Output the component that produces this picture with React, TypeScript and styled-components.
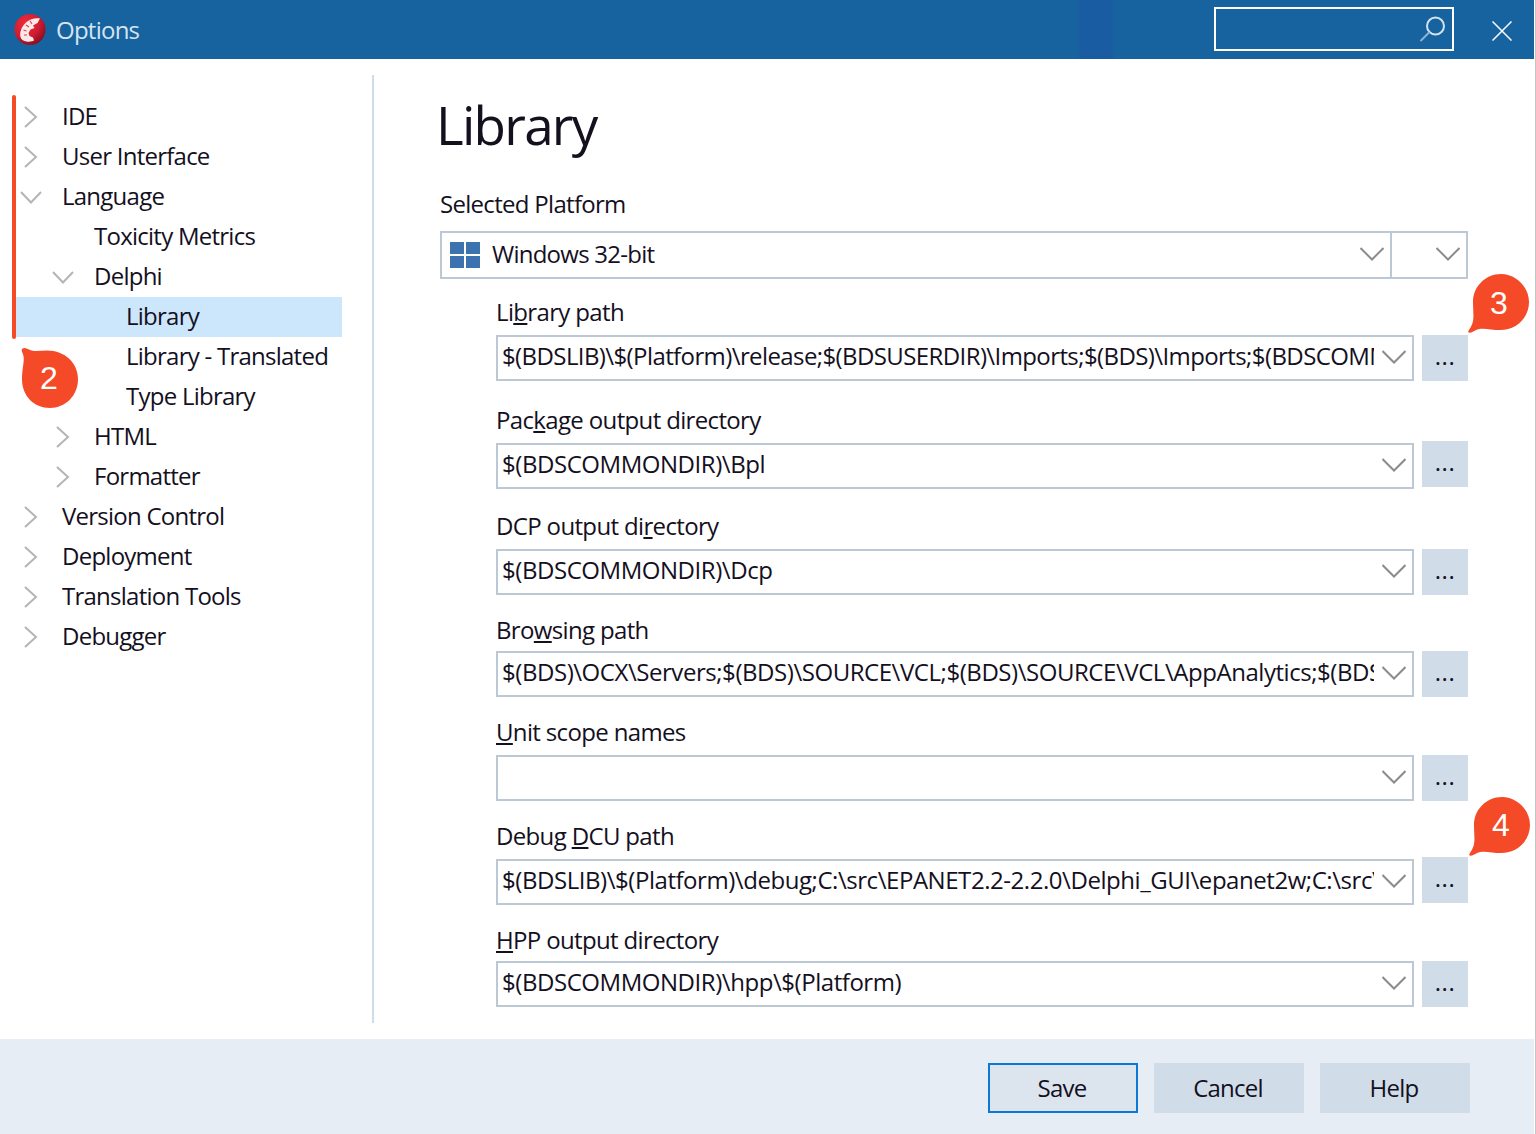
import React from "react";
import styled, { createGlobalStyle } from "styled-components";

const Global = createGlobalStyle`
    html, body { margin: 0; padding: 0; background: #fff; }
    * { box-sizing: border-box; }
`;

const FONT = `"Open Sans", "Noto Sans", "Liberation Sans", sans-serif`;

const Window = styled.div`
    position: relative;
    width: 1536px;
    height: 1134px;
    display: flex;
    flex-direction: column;
    background: #fff;
    padding-right: 1px;
    border-right: 1px solid #c4c4c4;
    font-family: ${FONT};
    font-size: 24px;
    letter-spacing: -0.75px;
    color: #14101e;
    overflow: hidden;
`;

const TitleBar = styled.header`
    height: 59px;
    flex: none;
    display: flex;
    align-items: center;
    padding-left: 14px;
    background: linear-gradient(
        to right,
        #1663a0 1077px,
        #1a5ca2 1080px,
        #1a5ca2 1112px,
        #1663a0 1115px
    );
    color: #d6e4f0;
`;

const TitleText = styled.span`
    margin-left: 10px;
    flex: 1;
`;

const SearchBox = styled.div`
    width: 240px;
    height: 44px;
    margin-bottom: 1px;
    border: 2px solid #fff;
    display: flex;
    align-items: center;
    justify-content: flex-end;
    padding-right: 4px;
`;

const CloseButton = styled.button`
    width: 20px;
    height: 20px;
    margin: 2px 22px 0 38px;
    padding: 0;
    border: 0;
    background: none;
    display: flex;
`;

const Body = styled.div`
    flex: 1;
    display: flex;
    min-height: 0;
`;

const Sidebar = styled.nav`
    width: 326px;
    margin-left: 16px;
    padding-top: 38px;
    flex: none;
`;

const Divider = styled.div`
    width: 2px;
    margin: 16px 0 16px 30px;
    background: #cfdce9;
`;

const TreeRow = styled.div<{ $depth: number; $selected?: boolean }>`
    height: 40px;
    display: flex;
    align-items: center;
    padding-left: ${({ $depth }) => $depth * 32}px;
    background: ${({ $selected }) => ($selected ? "#cce6fc" : "transparent")};
`;

const TreeLabel = styled.span`
    padding-bottom: 4px;
`;

const Toggle = styled.span`
    width: 46px;
    height: 24px;
    flex: none;
    padding-left: 3px;
`;

const Main = styled.main`
    flex: 1;
    padding: 27px 66px 0 66px;
`;

const Title = styled.h1`
    margin: 0 0 0 -4px;
    height: 78px;
    font-size: 53px;
    font-weight: 400;
    line-height: 78px;
    letter-spacing: -1.75px;
    color: #14101e;
`;

const PlatformLabel = styled.div`
    margin-top: 23px;
    height: 34px;
    line-height: 34px;
    letter-spacing: -0.7px;
`;

const PlatformCombo = styled.div`
    margin-top: 10px;
    height: 48px;
    display: flex;
    border: 2px solid #bcc9d4;
`;

const PlatformValue = styled.div`
    flex: 1;
    display: flex;
    align-items: center;
    padding-left: 8px;
    gap: 12px;
    border-right: 2px solid #bcc9d4;
`;

const ComboArrow = styled.span<{ $width?: number; $gap?: number }>`
    width: ${({ $width }) => $width ?? 30}px;
    height: 24px;
    flex: none;
    margin-left: ${({ $gap }) => $gap ?? 0}px;
`;

const PlatformExtra = styled.div`
    width: 74px;
    display: flex;
    align-items: center;
    justify-content: flex-end;
    padding-right: 6px;
`;

const PlatformName = styled.span`
    flex: 1;
    padding-bottom: 4px;
`;

const Fields = styled.div`
    padding-left: 56px;
`;

const Field = styled.div<{ $top: number; $labelGap: number }>`
    margin-top: ${({ $top }) => $top}px;
    label {
        display: block;
        height: 34px;
        line-height: 32px;
        letter-spacing: -0.65px;
        margin-bottom: ${({ $labelGap }) => $labelGap}px;
    }
`;

const FieldControls = styled.div`
    display: flex;
    gap: 8px;
`;

const PathCombo = styled.div`
    width: 918px;
    height: 46px;
    display: flex;
    align-items: center;
    border: 2px solid #bcc9d4;
    padding-left: 4px;
`;

const PathText = styled.span<{ $tracking?: number }>`
    width: 872px;
    height: 34px;
    margin-bottom: 4px;
    line-height: 34px;
    flex: none;
    overflow: hidden;
    white-space: nowrap;
    letter-spacing: ${({ $tracking }) => $tracking ?? -0.45}px;
`;

const Browse = styled.button<{ $raised?: boolean }>`
    width: 46px;
    height: 46px;
    margin-top: ${({ $raised }) => ($raised ? -2 : 0)}px;
    padding: 0 0 6px;
    border: 0;
    background: #d0dde8;
    font: inherit;
    font-size: 24px;
    letter-spacing: 0.5px;
    color: #14101e;
`;

const Footer = styled.footer`
    height: 95px;
    flex: none;
    display: flex;
    justify-content: flex-end;
    align-items: flex-start;
    gap: 16px;
    padding: 24px 64px 0 0;
    background: #e6edf4;
`;

const FooterButton = styled.button<{ $primary?: boolean }>`
    width: 150px;
    height: 50px;
    padding: 0 2px 2px 0;
    font: inherit;
    color: #14101e;
    letter-spacing: -0.75px;
    background: ${({ $primary }) => ($primary ? "#dce5ee" : "#d0dde8")};
    border: ${({ $primary }) => ($primary ? "2px solid #0a78d4" : "0")};
`;

const RedBar = styled.div`
    position: absolute;
    left: 12px;
    top: 95px;
    width: 4px;
    height: 244px;
    border-radius: 2px;
    background: #f54a27;
`;

const Bubble = styled.div<{ $x: number; $y: number }>`
    position: absolute;
    left: ${({ $x }) => $x}px;
    top: ${({ $y }) => $y}px;
    width: 62px;
    height: 62px;
    display: flex;
    align-items: center;
    justify-content: center;
    color: #fff;
    font-family: "Liberation Sans", sans-serif;
    font-size: 32px;
    letter-spacing: 0;
    svg {
        position: absolute;
        inset: 0;
    }
`;

const BubbleNumber = styled.span<{ $dx: number; $dy: number }>`
    position: relative;
    left: ${({ $dx }) => $dx}px;
    top: ${({ $dy }) => $dy}px;
`;

const Chevron = ({ open }: { open?: boolean }) => (
    <svg width="24" height="24" viewBox="0 0 24 24" fill="none" stroke="#b4b4b4" strokeWidth="2" style={{ display: "block" }}>
        <path d={open ? "M2 7l10 10.500L22 7" : "M6 2l11 10L6 22"} />
    </svg>
);

const ComboChevron = () => (
    <svg width="24" height="24" viewBox="0 0 24 24" fill="none" stroke="#8c8c8c" strokeWidth="2" style={{ display: "block" }}>
        <path d="M0.500 5L12 16.500L23.500 5" />
    </svg>
);

const Logo = () => (
    <svg width="32" height="32" viewBox="0 0 32 32">
        <defs>
            <radialGradient id="logoRed" cx="35%" cy="30%" r="75%">
                <stop offset="0%" stopColor="#f02a3a" />
                <stop offset="60%" stopColor="#d01c30" />
                <stop offset="100%" stopColor="#880d20" />
            </radialGradient>
        </defs>
        <circle cx="16" cy="15.500" r="15.500" fill="url(#logoRed)" />
        <path
            d="M26 4.500C21 3.500 15 5.500 11.500 9 7.500 13 5.500 18 6.500 23c.5 2.500 3 4 6 4.500 3 .5 5.500 0 7.500-1l-1-3-3.500-1.500-1-3 2-3.500 4-1.500-1.500-2.500 4.500-2.500z"
            fill="#fbe9ea"
        />
        <path d="M12 11l3 2M9.500 16l3 1M10 21l3 0M16 7l2 3" stroke="#d8455a" strokeWidth="1.200" />
    </svg>
);

const SearchIcon = () => (
    <svg width="30" height="30" viewBox="0 0 30 30" fill="none" strokeWidth="2">
        <circle cx="17.500" cy="12" r="8.500" stroke="#d4e2ee" />
        <path d="M11.500 18L2.500 27" stroke="#8fb4d2" />
    </svg>
);

const CloseIcon = () => (
    <svg width="20" height="20" viewBox="0 0 20 20" stroke="#fff" strokeWidth="1.500">
        <path d="M0.500 0.500l19 19M19.500 0.500l-19 19" />
    </svg>
);

const WindowsIcon = () => (
    <svg width="30" height="26" viewBox="0 0 30 26" fill="#3c72b0">
        <rect x="0" y="0" width="14" height="12" />
        <rect x="16" y="0" width="14" height="12" />
        <rect x="0" y="14" width="14" height="12" />
        <rect x="16" y="14" width="14" height="12" />
    </svg>
);

const BubbleShape = ({ tail }: { tail: "top" | "bottom" }) => (
    <svg width="62" height="62" viewBox="0 0 62 62" fill="#f54a27">
        {tail === "top" ? (
            <path d="M1 3C3 1 5 2 8 3.500 C13 6 19 4.500 26 4.500 C44 4.500 57 17 57 33 C57 50 44 62 29 62 C13 62 1 50 1 33 C1 23 3.500 16 2.500 10 C2 7 0 5 1 3Z" />
        ) : (
            <path d="M1 58C3 54 5 52 6 47 C7 42 6 36 6 28 C6 13 18 0 34 0 C49 0 62 13 62 28 C62 44 49 56 33 56 C24 56 15 53 9 56 C6 57.500 3 60 1 58Z" />
        )}
    </svg>
);

const tree: { name: string; depth: number; state?: "open" | "closed"; selected?: boolean }[] = [
    { name: "IDE", depth: 0, state: "closed" },
    { name: "User Interface", depth: 0, state: "closed" },
    { name: "Language", depth: 0, state: "open" },
    { name: "Toxicity Metrics", depth: 1 },
    { name: "Delphi", depth: 1, state: "open" },
    { name: "Library", depth: 2, selected: true },
    { name: "Library - Translated", depth: 2 },
    { name: "Type Library", depth: 2 },
    { name: "HTML", depth: 1, state: "closed" },
    { name: "Formatter", depth: 1, state: "closed" },
    { name: "Version Control", depth: 0, state: "closed" },
    { name: "Deployment", depth: 0, state: "closed" },
    { name: "Translation Tools", depth: 0, state: "closed" },
    { name: "Debugger", depth: 0, state: "closed" },
];

const fields: {
    id: string;
    label: React.ReactNode;
    value: string;
    top: number;
    gap: number;
    tracking?: number;
    raised?: boolean;
}[] = [
    {
        id: "library",
        label: <>Li<u>b</u>rary path</>,
        value: "$(BDSLIB)\\$(Platform)\\release;$(BDSUSERDIR)\\Imports;$(BDS)\\Imports;$(BDSCOMM",
        top: 17,
        gap: 5,
        tracking: -0.6,
    },
    { id: "package", label: <>Pac<u>k</u>age output directory</>, value: "$(BDSCOMMONDIR)\\Bpl", top: 23, gap: 5, raised: true },
    { id: "dcp", label: <>DCP output di<u>r</u>ectory</>, value: "$(BDSCOMMONDIR)\\Dcp", top: 21, gap: 5 },
    {
        id: "browsing",
        label: <>Bro<u>w</u>sing path</>,
        value: "$(BDS)\\OCX\\Servers;$(BDS)\\SOURCE\\VCL;$(BDS)\\SOURCE\\VCL\\AppAnalytics;$(BDS",
        top: 19,
        gap: 3,
    },
    { id: "scope", label: <><u>U</u>nit scope names</>, value: "", top: 19, gap: 5 },
    {
        id: "debug",
        label: <>Debug <u>D</u>CU path</>,
        value: "$(BDSLIB)\\$(Platform)\\debug;C:\\src\\EPANET2.2-2.2.0\\Delphi_GUI\\epanet2w;C:\\src\\",
        top: 19,
        gap: 5,
        raised: true,
    },
    { id: "hpp", label: <><u>H</u>PP output directory</>, value: "$(BDSCOMMONDIR)\\hpp\\$(Platform)", top: 19, gap: 3 },
];

export default function App() {
    return (
        <>
            <Global />
            <Window>
                <TitleBar>
                    <Logo />
                    <TitleText>Options</TitleText>
                    <SearchBox>
                        <SearchIcon />
                    </SearchBox>
                    <CloseButton aria-label="Close">
                        <CloseIcon />
                    </CloseButton>
                </TitleBar>
                <Body>
                    <Sidebar>
                        {tree.map((item) => (
                            <TreeRow key={item.name} $depth={item.depth} $selected={item.selected}>
                                <Toggle>{item.state && <Chevron open={item.state === "open"} />}</Toggle>
                                <TreeLabel>{item.name}</TreeLabel>
                            </TreeRow>
                        ))}
                    </Sidebar>
                    <Divider />
                    <Main>
                        <Title>Library</Title>
                        <PlatformLabel>Selected Platform</PlatformLabel>
                        <PlatformCombo>
                            <PlatformValue>
                                <WindowsIcon />
                                <PlatformName>Windows 32-bit</PlatformName>
                                <ComboArrow>
                                    <ComboChevron />
                                </ComboArrow>
                            </PlatformValue>
                            <PlatformExtra>
                                <ComboArrow $width={24}>
                                    <ComboChevron />
                                </ComboArrow>
                            </PlatformExtra>
                        </PlatformCombo>
                        <Fields>
                            {fields.map((field) => (
                                <Field key={field.id} $top={field.top} $labelGap={field.gap}>
                                    <label>{field.label}</label>
                                    <FieldControls>
                                        <PathCombo>
                                            <PathText $tracking={field.tracking}>{field.value}</PathText>
                                            <ComboArrow $width={24} $gap={8}>
                                                <ComboChevron />
                                            </ComboArrow>
                                        </PathCombo>
                                        <Browse $raised={field.raised}>...</Browse>
                                    </FieldControls>
                                </Field>
                            ))}
                        </Fields>
                    </Main>
                </Body>
                <Footer>
                    <FooterButton $primary>Save</FooterButton>
                    <FooterButton>Cancel</FooterButton>
                    <FooterButton>Help</FooterButton>
                </Footer>
                <RedBar />
                <Bubble $x={21} $y={346}>
                    <BubbleShape tail="top" />
                    <BubbleNumber $dx={-3} $dy={1}>2</BubbleNumber>
                </Bubble>
                <Bubble $x={1467} $y={274}>
                    <BubbleShape tail="bottom" />
                    <BubbleNumber $dx={1} $dy={-2}>3</BubbleNumber>
                </Bubble>
                <Bubble $x={1468} $y={797}>
                    <BubbleShape tail="bottom" />
                    <BubbleNumber $dx={2} $dy={-3}>4</BubbleNumber>
                </Bubble>
            </Window>
        </>
    );
}
